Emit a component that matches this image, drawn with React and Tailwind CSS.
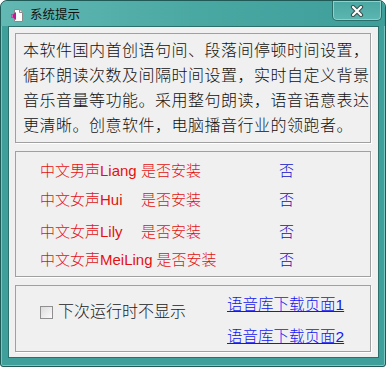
import React, { useState } from 'react';

const cjk = { fontFamily: '"Liberation Sans", "Noto Sans CJK SC", sans-serif' };

function DocIcon() {
  return (
    <svg width="14" height="15" viewBox="0 0 14 15">
      <path d="M4.5 1.5h5l3 3v9h-8z" fill="#fdfdfd" stroke="#8a8a8a" />
      <path d="M9.5 1.5v3h3" fill="#e6e6e6" stroke="#8a8a8a" />
      <path d="M1 6.5h2l3-2.5v8l-3-2.5h-2z" fill="#c2188f" />
      <path d="M1.5 7h1.2v2h-1.2z" fill="#f07ccd" />
    </svg>
  );
}

function CloseButton() {
  return (
    <div className="w-[50px] h-[20px] rounded-b-[5px] border border-t-0 border-[#2a6d69] bg-gradient-to-b from-[#4aa7a2] to-[#5cb6b1] shadow-[inset_0_0_0_1px_#8fd0cb] flex items-center justify-center">
      <svg width="14" height="12" viewBox="0 0 14 12">
        <path d="M3 2l8 8M11 2l-8 8" stroke="#3b4d4c" strokeWidth="4.2" strokeLinecap="round" />
        <path d="M3 2l8 8M11 2l-8 8" stroke="#ffffff" strokeWidth="2.2" strokeLinecap="round" />
      </svg>
    </div>
  );
}

const voices = [
  { name: '中文男声Liang', state: '否', gap: 'mt-[7px]' },
  { name: '中文女声Hui', state: '否', gap: 'mt-[5px]' },
  { name: '中文女声Lily', state: '否', gap: 'mt-[8px]' },
  { name: '中文女声MeiLing', state: '否', gap: 'mt-[4px]' },
];

const intro = [
  '本软件国内首创语句间、段落间停顿时间设置，',
  '循环朗读次数及间隔时间设置，实时自定义背景',
  '音乐音量等功能。采用整句朗读，语音语意表达',
  '更清晰。创意软件，电脑播音行业的领跑者。',
];

export default function App() {
  const [hideNext, setHideNext] = useState(false);

  return (
    <div className="w-[386px] h-[367px] rounded-t-[7px] rounded-b-[3px] border border-[#1f5a57] bg-[#3f9f9a] shadow-[inset_0_0_0_1px_#7cc6c1] flex flex-col" style={cjk}>
      {/* title bar */}
      <div className="h-[25px] flex items-start rounded-t-[7px] bg-gradient-to-r from-[#62b8b3] via-[#4aa8a3] to-[#3e9e99]">
        <div className="flex items-center pl-[9px] pt-[6px]">
          <DocIcon />
          <span className="ml-[6px] text-[12.5px] leading-[16px] text-[#111]">系统提示</span>
        </div>
        <div className="ml-auto mr-[3px]">
          <CloseButton />
        </div>
      </div>

      {/* client area */}
      <div className="ml-[7px] mr-[6px] mb-[8px] flex-1 bg-[#f0f0f0] border border-[#2c6f6b] flex flex-col">
        <div className="ml-[6px] mt-[6px] w-[356px] h-[110px] border border-[#a0a0a0] shadow-[1px_1px_0_#ffffff] pl-[7px] pt-[4px]">
          {intro.map((line) => (
            <div key={line} className="text-[16px] leading-[25px] tracking-[0.5px] font-light text-[#111] whitespace-nowrap">
              {line}
            </div>
          ))}
        </div>

        <div className="ml-[6px] mt-[8px] w-[356px] h-[126px] border border-[#a0a0a0] shadow-[1px_1px_0_#ffffff] pl-[24px]">
          {voices.map((v) => (
            <div key={v.name} className={`${v.gap} h-[24px] flex items-center text-[15px] font-light whitespace-nowrap`}>
              <span className="w-[239px] text-[#e41010]">
                <span className="inline-block min-w-[97px] mr-[4px]">{v.name}</span>
                是否安装
              </span>
              <span className="text-[#1010c8]">{v.state}</span>
            </div>
          ))}
        </div>

        <div className="ml-[6px] mt-[8px] w-[356px] h-[67px] border border-[#a0a0a0] shadow-[1px_1px_0_#ffffff] flex">
          <label className="w-[210px] pl-[24px] pt-[14px] flex items-start cursor-default">
            <span className="mt-[6px] w-[13px] h-[13px] border border-[#8f8f8f] bg-gradient-to-br from-[#dcdcdc] to-[#fafafa] flex items-center justify-center">
              <input
                type="checkbox"
                className="hidden"
                checked={hideNext}
                onChange={(e) => setHideNext(e.target.checked)}
              />
              {hideNext && <span className="text-[10px] leading-none text-[#222]">✓</span>}
            </span>
            <span className="ml-[5px] text-[16px] leading-[24px] font-light text-[#1a1a1a]">下次运行时不显示</span>
          </label>
          <div className="flex flex-col pt-[9px] pl-[1px]">
            <a href="#" className="text-[15.5px] leading-[20px] font-light text-[#1515f0] underline whitespace-nowrap">语音库下载页面1</a>
            <a href="#" className="mt-[12px] text-[15.5px] leading-[20px] font-light text-[#1515f0] underline whitespace-nowrap">语音库下载页面2</a>
          </div>
        </div>
      </div>
    </div>
  );
}
